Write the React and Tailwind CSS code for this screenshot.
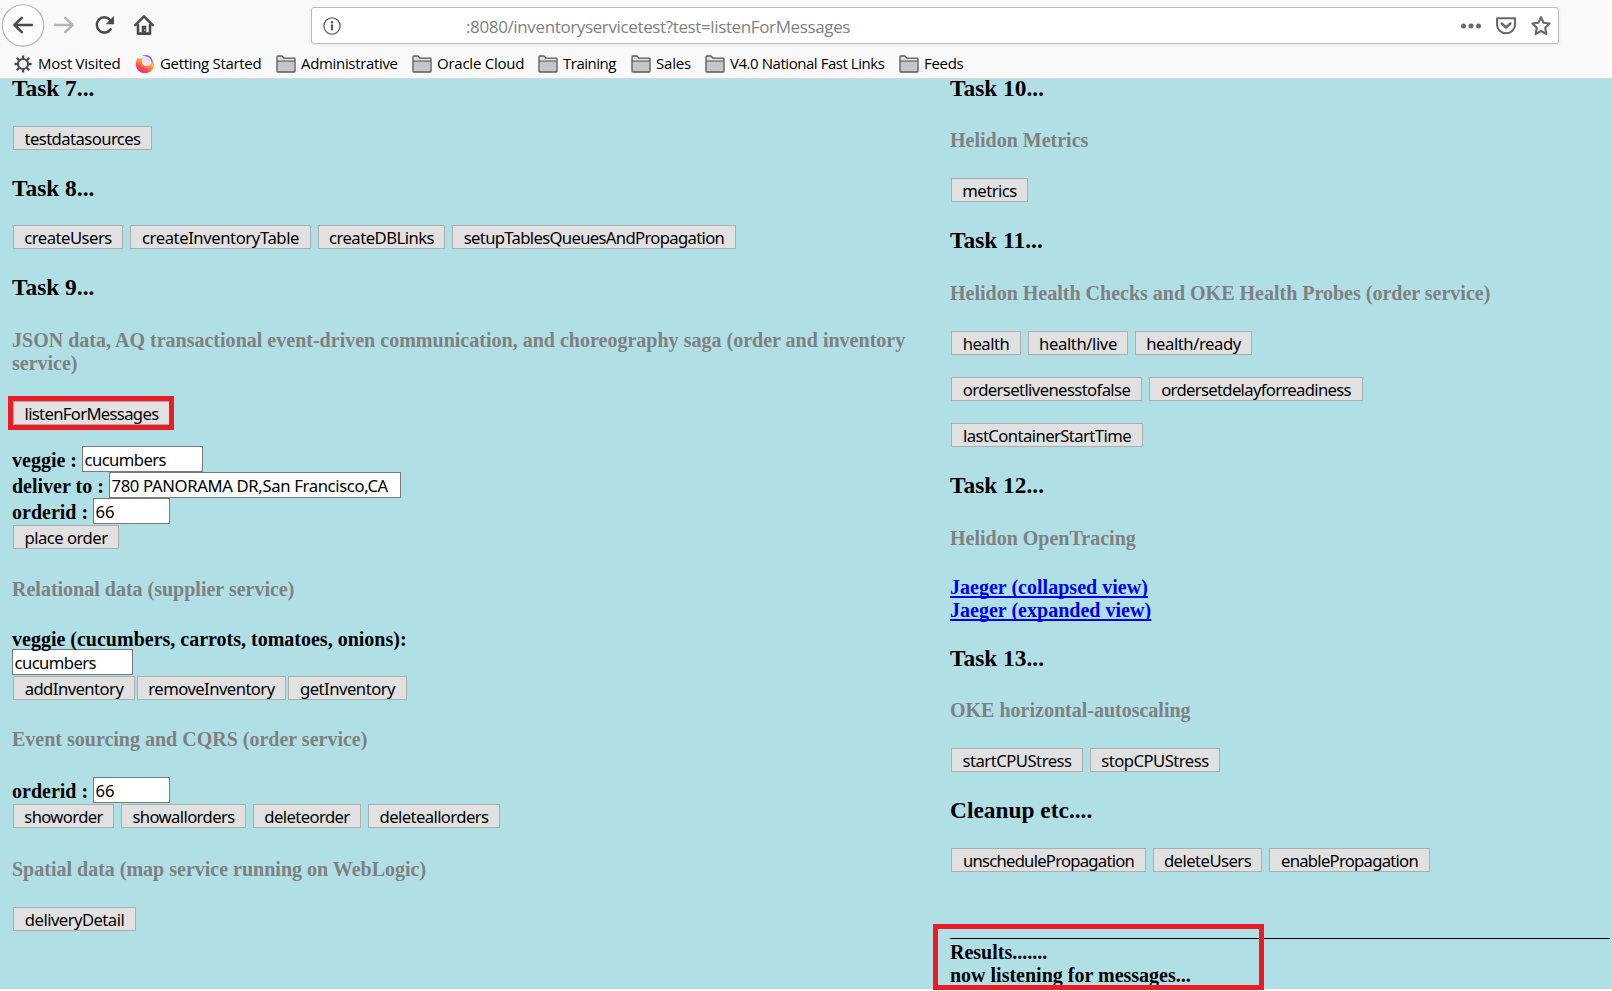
const SERIF = "font-['Liberation_Serif','Times_New_Roman',serif]";
const SANS = "font-['Noto_Sans','Liberation_Sans',sans-serif]";
const CHROME = "font-['Open_Sans','Noto_Sans',sans-serif]";

function Task({ children, className }) {
  return <h3 className={`${className} whitespace-nowrap text-[23.4px] leading-[27px]`}>{children}</h3>;
}

function Topic({ children, className }) {
  return <h4 className={`${className} whitespace-nowrap leading-[23px] text-[#808080]`}>{children}</h4>;
}

function Buttons({ items, className, gap = "gap-[7px]" }) {
  return (
    <div className={`${className} ${gap} ml-px flex`}>
      {items.map(([label, size]) => (
        <button
          key={label}
          className={`${SANS} ${size} flex h-6 shrink-0 items-start justify-center border border-[#adadad] bg-[#e1e1e1] text-[16.67px] leading-[23px] font-normal whitespace-nowrap`}
        >
          {label}
        </button>
      ))}
    </div>
  );
}

function Field({ value, className }) {
  return (
    <div className={`${SANS} ${className} h-[26px] shrink-0 border border-[#7a7a7a] bg-white pl-[1.5px] text-[16.67px] leading-[25px] font-normal whitespace-nowrap`}>
      {value}
    </div>
  );
}

function LabeledField({ label, labelWidth, value, className }) {
  return (
    <div className="flex h-[26px] leading-[23px]">
      <label className={`${labelWidth} shrink-0 pt-[3px] whitespace-nowrap`}>{label}</label>
      <Field value={value} className={className} />
    </div>
  );
}

function FolderIcon() {
  return (
    <svg width="20" height="18" viewBox="0 0 20 18" fill="none">
      <path d="M1 17V1.8L1.8 1H6.6L8.6 3.2H18.2L19 4V17Z" fill="#dededf" />
      <path d="M1.5 6.5H18.5V16.5H1.5Z" fill="#c6c6c8" />
      <path d="M1 6.1H19" stroke="#58585a" strokeWidth="1.1" />
      <path d="M1 16.3V1.8Q1 1 1.8 1H5.6Q6.3 1 6.7 1.6L7.7 3.1H18.2Q19 3.1 19 3.9V16.3Q19 17 18.2 17H1.8Q1 17 1 16.3Z" stroke="#58585a" strokeWidth="1.3" />
    </svg>
  );
}

function GearIcon() {
  return (
    <svg width="18" height="18" viewBox="0 0 18 18" fill="none" stroke="#4b4b4c">
      <circle cx="9" cy="9" r="5" strokeWidth="2.2" />
      <path d="M9 .4V3.6M9 14.4V17.6M.4 9H3.6M14.4 9H17.6M2.9 2.9L5.2 5.2M12.8 12.8L15.1 15.1M2.9 15.1L5.2 12.8M12.8 5.2L15.1 2.9" strokeWidth="2.3" />
    </svg>
  );
}

function FirefoxIcon() {
  return (
    <svg width="20" height="20" viewBox="0 0 20 20">
      <defs>
        <linearGradient id="flame" x1="0.9" y1="0.1" x2="0.3" y2="0.95">
          <stop offset="0" stopColor="#ffe14a" />
          <stop offset="0.45" stopColor="#ff9a33" />
          <stop offset="0.75" stopColor="#ff4a4b" />
          <stop offset="1" stopColor="#f0307a" />
        </linearGradient>
        <linearGradient id="tail" x1="0" y1="0" x2="1" y2="1">
          <stop offset="0" stopColor="#c04bf2" />
          <stop offset="1" stopColor="#6f4dff" />
        </linearGradient>
      </defs>
      <circle cx="11" cy="8" r="6" fill="#e9e6fb" />
      <path d="M3.2 3.4C3.4 4.2 4 4.6 5 4.7C6.2 4.8 7.2 4.4 8.3 3.6C6.8 6 6.4 8.4 7.6 10.2C9 12.4 12.5 12.7 14.6 11C16.2 9.7 16.9 7.6 16.5 5.2C18.3 6.6 19.2 8.4 19.1 10.6C18.9 15.6 15 19.2 10 19.2C4.8 19.2 .8 15.3 .9 10.2C.9 7.6 1.6 5.4 3.2 3.4Z" fill="url(#flame)" />
      <path d="M6.4 2.2C9.5 .2 13.4 .6 15.7 3.2C17.5 5.2 17.9 7.7 17.2 10.2C17 7.4 16 5.2 14 3.7C11.8 2 9.2 1.6 6.4 2.2Z" fill="url(#tail)" />
    </svg>
  );
}

const bookmarks = [
  { label: "Most Visited", icon: <GearIcon />, size: "w-[121px] pl-[14px] gap-[6px] tracking-[-0.26px]" },
  { label: "Getting Started", icon: <FirefoxIcon />, size: "w-[155px] pl-[14px] gap-[5px] tracking-[-0.32px]" },
  { label: "Administrative", icon: <FolderIcon />, size: "w-[136px] gap-[5px] tracking-[-0.33px]" },
  { label: "Oracle Cloud", icon: <FolderIcon />, size: "w-[126px] gap-[5px] tracking-[-0.24px]" },
  { label: "Training", icon: <FolderIcon />, size: "w-[93px] gap-[5px] tracking-[-0.48px]" },
  { label: "Sales", icon: <FolderIcon />, size: "w-[74px] gap-[5px] tracking-[-0.2px]" },
  { label: "V4.0 National Fast Links", icon: <FolderIcon />, size: "w-[194px] gap-[5px] tracking-[-0.45px]" },
  { label: "Feeds", icon: <FolderIcon />, size: "w-[80px] gap-[5px] tracking-[-0.3px]" },
];

function Bookmark({ icon, label, size }) {
  return (
    <div className={`${size} flex shrink-0 items-center whitespace-nowrap`}>
      <span className="flex shrink-0 items-center">{icon}</span>
      <span className="pb-[2px]">{label}</span>
    </div>
  );
}

function NavBar() {
  return (
    <div className="flex h-[50px] items-center">
      <svg className="shrink-0" width="311" height="50" viewBox="0 0 311 50" fill="none" strokeLinecap="round" strokeLinejoin="round">
        <circle cx="23" cy="25.4" r="20.7" fill="#fdfdfd" stroke="#b0b0b0" strokeWidth="1.1" />
        <path d="M31.8 25H14.6M21.8 17.8L14.4 25L21.8 32.2" stroke="#4a4a4b" strokeWidth="2.5" />
        <path d="M55.2 25H72.4M65.2 17.8L72.6 25L65.2 32.2" stroke="#b5b5b6" strokeWidth="2.5" />
        <path d="M110.7 29.2A7.6 7.6 0 1 1 109.8 19.6" stroke="#4a4a4b" strokeWidth="2.5" />
        <path d="M114 16V24.2H105.6Z" fill="#4a4a4b" />
        <path d="M135.2 25.2L144 16.4L152.8 25.2" stroke="#4a4a4b" strokeWidth="2.5" />
        <path d="M138 25V33.6H150V25" stroke="#4a4a4b" strokeWidth="2.6" />
        <path d="M142 33.5V26H146V33.5Z" fill="#4a4a4b" stroke="#4a4a4b" strokeWidth="0.6" />
        <circle cx="144.8" cy="30" r=".7" fill="#f9f9fa" />
      </svg>
      <div className="mt-[1px] flex h-[37px] w-[1248px] shrink-0 items-center rounded-[3px] border border-[#bbbbbc] bg-white pl-[11px] shadow-[0_1px_4px_rgba(0,0,0,0.06)]">
        <svg className="shrink-0" width="18" height="18" viewBox="0 0 18 18" fill="none">
          <circle cx="9" cy="9" r="8.1" stroke="#6a6a6b" strokeWidth="1.4" />
          <path d="M9 8.2V12.6" stroke="#5a5a5b" strokeWidth="2.1" strokeLinecap="round" />
          <circle cx="9" cy="5.2" r="1.3" fill="#5a5a5b" />
        </svg>
        <span className="w-[1112px] shrink-0 pt-[3px] pl-[125px] text-[17px] leading-6 tracking-[-0.37px] whitespace-nowrap text-[#7f7f80]">
          :8080/inventoryservicetest?test=listenForMessages
        </span>
        <svg className="shrink-0" width="100" height="22" viewBox="0 0 100 22" fill="none" stroke="#68686a" strokeWidth="2.1" strokeLinejoin="round" strokeLinecap="round">
          <g fill="#68686a" stroke="none">
            <circle cx="10.5" cy="11" r="2.5" />
            <circle cx="18" cy="11" r="2.5" />
            <circle cx="25.5" cy="11" r="2.5" />
          </g>
          <path d="M44.1 3.3H62V9.8A8.9 8.4 0 0 1 44.1 9.8Z" />
          <path d="M48.6 8.4L53 12.5L57.5 8.4" strokeWidth="2.4" />
          <path d="M88 2.2L90.6 7.7L96.6 8.5L92.2 12.7L93.4 19L88 16L82.6 19L83.8 12.7L79.4 8.5L85.4 7.7Z" />
        </svg>
      </div>
    </div>
  );
}

export default function App() {
  return (
    <div className="h-[991px] w-[1612px] overflow-hidden bg-white text-black">
      <header className={`${CHROME} h-[79px] border-b border-[#d9d9da] bg-[#f9f9fa]`}>
        <NavBar />
        <nav className="flex h-[27px] items-center text-[15px] leading-[20px]">
          {bookmarks.map((b) => (
            <Bookmark key={b.label} {...b} />
          ))}
        </nav>
      </header>

      <main className={`${SERIF} flex h-[910px] bg-[#b0e0e6] text-[20px] font-bold`}>
        <section className="w-[938px] shrink-0 pl-3">
          <Task className="-mt-1">Task 7...</Task>
          <Buttons className="mt-[24px]" items={[["testdatasources", "w-[139px] tracking-[-0.57px]"]]} />
          <Task className="mt-[25px]">Task 8...</Task>
          <Buttons
            className="mt-[23px]"
            items={[
              ["createUsers", "w-[110px] tracking-[-0.5px]"],
              ["createInventoryTable", "w-[181px] tracking-[-0.42px]"],
              ["createDBLinks", "w-[127px] tracking-[-0.52px]"],
              ["setupTablesQueuesAndPropagation", "w-[284px] tracking-[-0.67px]"],
            ]}
          />
          <Task className="mt-[25px]">Task 9...</Task>
          <Topic className="mt-[28px]">
            <span className="tracking-[0.012px]">
              JSON data, AQ transactional event-driven communication, and choreography saga (order and inventory
            </span>
            <br />
            service)
          </Topic>
          <div className="mt-[21px] -ml-1 flex w-[166px] border-[5px] border-[#ed1c24]">
            <button className={`${SANS} flex h-6 w-[156px] items-start justify-center border border-r-0 border-[#adadad] bg-[#e1e1e1] text-[16.67px] leading-[23px] font-normal tracking-[-0.67px]`}>
              listenForMessages
            </button>
          </div>
          <div className="mt-4">
            <LabeledField label="veggie :" labelWidth="w-[70px]" value="cucumbers" className="w-[121px] tracking-[-0.58px]" />
            <LabeledField label="deliver to :" labelWidth="w-[97px]" value="780 PANORAMA DR,San Francisco,CA" className="w-[292px] tracking-[-0.35px]" />
            <LabeledField label="orderid :" labelWidth="w-[81px]" value="66" className="w-[77px]" />
          </div>
          <Buttons className="mt-px" items={[["place order", "w-[106px] tracking-[-0.52px]"]]} />
          <Topic className="mt-[29px]">Relational data (supplier service)</Topic>
          <p className="mt-[27px] leading-[23px]">veggie (cucumbers, carrots, tomatoes, onions):</p>
          <Field value="cucumbers" className="-mt-[2px] w-[121px] tracking-[-0.58px]" />
          <Buttons
            className="mt-px"
            gap="gap-[2px]"
            items={[
              ["addInventory", "w-[122px] tracking-[-0.56px]"],
              ["removeInventory", "w-[149px] tracking-[-0.56px]"],
              ["getInventory", "w-[119px] tracking-[-0.5px]"],
            ]}
          />
          <Topic className="mt-[28px]">Event sourcing and CQRS (order service)</Topic>
          <div className="mt-[26px]">
            <LabeledField label="orderid :" labelWidth="w-[81px]" value="66" className="w-[77px]" />
          </div>
          <Buttons
            className="mt-px"
            items={[
              ["showorder", "w-[101px] tracking-[-0.65px]"],
              ["showallorders", "w-[125px] tracking-[-0.62px]"],
              ["deleteorder", "w-[108px] tracking-[-0.6px]"],
              ["deleteallorders", "w-[132px] tracking-[-0.6px]"],
            ]}
          />
          <Topic className="mt-[30px]">Spatial data (map service running on WebLogic)</Topic>
          <Buttons className="mt-[26px]" items={[["deliveryDetail", "w-[123px] tracking-[-0.55px]"]]} />
        </section>

        <section className="relative w-[674px] shrink-0 pl-3">
          <Task className="-mt-1">Task 10...</Task>
          <Topic className="mt-[27px]">Helidon Metrics</Topic>
          <Buttons className="mt-[26px]" items={[["metrics", "w-[77px] tracking-[-0.5px]"]]} />
          <Task className="mt-[25px]">Task 11...</Task>
          <Topic className="mt-[28px]">Helidon Health Checks and OKE Health Probes (order service)</Topic>
          <Buttons
            className="mt-[26px]"
            items={[
              ["health", "w-[70px] tracking-[-0.5px]"],
              ["health/live", "w-[100px] tracking-[-0.4px]"],
              ["health/ready", "w-[117px] tracking-[-0.45px]"],
            ]}
          />
          <Buttons
            className="mt-[22px]"
            items={[
              ["ordersetlivenesstofalse", "w-[191px] tracking-[-0.61px]"],
              ["ordersetdelayforreadiness", "w-[214px] tracking-[-0.67px]"],
            ]}
          />
          <Buttons className="mt-[22px]" items={[["lastContainerStartTime", "w-[192px] tracking-[-0.58px]"]]} />
          <Task className="mt-[25px]">Task 12...</Task>
          <Topic className="mt-[28px]">Helidon OpenTracing</Topic>
          <div className="mt-[26px] flex flex-col items-start leading-[23px] tracking-[0.02px] text-[#0000ee] underline decoration-2 underline-offset-[2px] [text-decoration-skip-ink:none]">
            <a>Jaeger (collapsed view)</a>
            <a>Jaeger (expanded view)</a>
          </div>
          <Task className="mt-[23px]">Task 13...</Task>
          <Topic className="mt-[27px]">OKE horizontal-autoscaling</Topic>
          <Buttons
            className="mt-[26px]"
            items={[
              ["startCPUStress", "w-[132px] tracking-[-0.5px]"],
              ["stopCPUStress", "w-[130px] tracking-[-0.53px]"],
            ]}
          />
          <Task className="mt-[25px]">Cleanup etc....</Task>
          <Buttons
            className="mt-[24px]"
            items={[
              ["unschedulePropagation", "w-[195px] tracking-[-0.76px]"],
              ["deleteUsers", "w-[109px] tracking-[-0.54px]"],
              ["enablePropagation", "w-[161px] tracking-[-0.74px]"],
            ]}
          />
          <div className="mt-[66px] mr-[2px] border-t border-black leading-[23px]">
            <p className="mt-[2px]">Results.......</p>
            <p>now listening for messages...</p>
          </div>
          <div className="absolute top-[845px] -left-[5px] h-[66px] w-[331px] border-[5px] border-[#ed1c24]" />
        </section>
      </main>
    </div>
  );
}
